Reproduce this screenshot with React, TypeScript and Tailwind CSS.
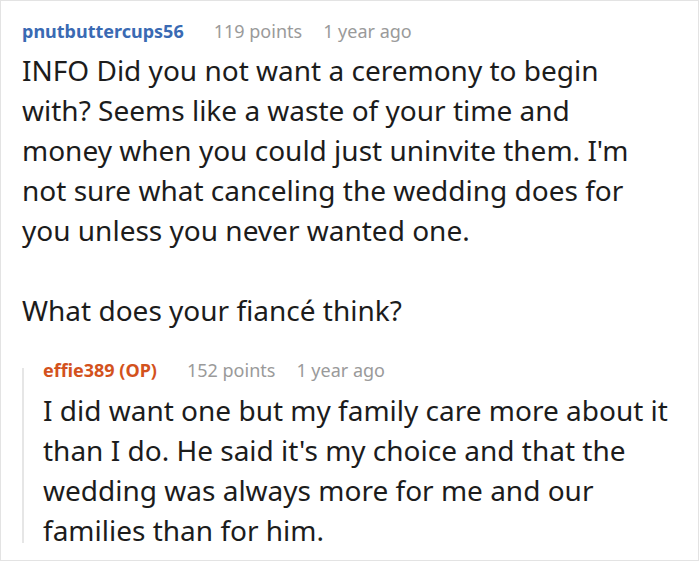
import React from "react";

export default function App() {
  return (
    <div className="w-[700px] h-[562px] bg-white" style={{ fontFamily: '"Noto Sans", "Open Sans", sans-serif' }}>
      <div className="w-[699px] h-[561px] border border-[#e3e3e3] overflow-hidden pl-[21px] pr-[26px]">
        <div className="flex items-baseline gap-[30px] pt-[17px] text-[18px] leading-[26px]">
          <span className="font-bold text-[#3a6ab3]">pnutbuttercups56</span>
          <span className="text-[#9a9a9a] flex gap-[21px]"><span>119 points</span><span>1 year ago</span></span>
        </div>
        <div className="text-[28px] leading-[40px] text-[#1c1c1c] mt-[6px] pr-[17px]">
          <p>INFO Did you not want a ceremony to begin with? Seems like a waste of your time and money when you could just uninvite them. I'm not sure what canceling the wedding does for you unless you never wanted one.</p>
          <p className="mt-[40px]">What does your fiancé think?</p>
        </div>
        <div className="flex mt-[27px]">
          <div className="w-[2px] bg-[#e6e6e6] shrink-0 mt-[11px] mb-[7px]" />
          <div className="pl-[19px]">
            <div className="flex items-baseline gap-[30px] text-[18px] leading-[26px]">
              <span className="font-bold text-[#d3521d]">effie389 (OP)</span>
              <span className="text-[#9a9a9a] flex gap-[21px]"><span>152 points</span><span>1 year ago</span></span>
            </div>
            <p className="text-[28px] leading-[40px] text-[#1c1c1c] mt-[7px]">I did want one but my family care more about it than I do. He said it's my choice and that the wedding was always more for me and our families than for him.</p>
          </div>
        </div>
      </div>
    </div>
  );
}
